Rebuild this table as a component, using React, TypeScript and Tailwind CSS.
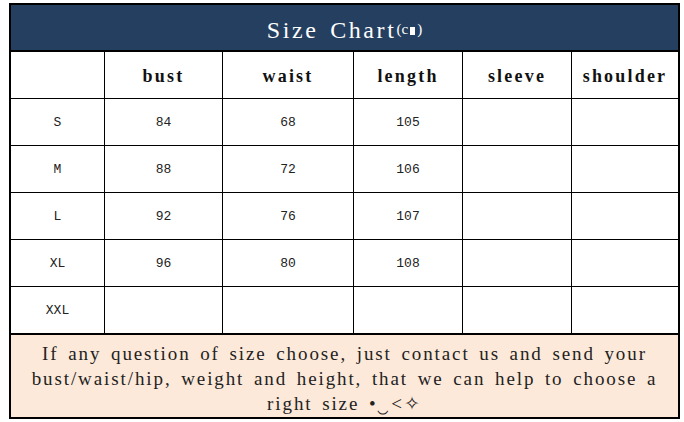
import React from 'react';

const cols = 'grid grid-cols-[94px_118px_131px_109px_109px_1fr]';

const headers = ['', 'bust', 'waist', 'length', 'sleeve', 'shoulder'];

const rows: string[][] = [
  ['S', '84', '68', '105', '', ''],
  ['M', '88', '72', '106', '', ''],
  ['L', '92', '76', '107', '', ''],
  ['XL', '96', '80', '108', '', ''],
  ['XXL', '', '', '', '', ''],
];

export default function App() {
  return (
    <div className="w-[684px] h-[422px] bg-white pt-[3px] pl-[9px] font-['Liberation_Serif',serif]">
      <div className="w-[671px] h-[416px] border-2 border-black flex flex-col">
        {/* Title */}
        <div className="h-[47px] shrink-0 bg-[#243f60] border-b-2 border-black flex items-center justify-center pt-[4px] text-white">
          <span className="text-[24px] tracking-[2.6px] [word-spacing:3px] leading-none">Size Chart</span>
          <span className="text-[15px] leading-none flex items-end">
            (c<span className="inline-block w-[5px] h-[8px] bg-white mx-[2px] mb-[2px]" />)
          </span>
        </div>

        {/* Header row */}
        <div className={`${cols} h-[47px] shrink-0 border-b border-black`}>
          {headers.map((h, i) => (
            <div
              key={i}
              className="flex items-center justify-center pt-[3px] border-r border-black last:border-r-0 text-[18px] font-bold tracking-[2.2px] text-[#111]"
            >
              {h}
            </div>
          ))}
        </div>

        {/* Data rows */}
        {rows.map((r, ri) => (
          <div
            key={ri}
            className={`${cols} h-[47px] shrink-0 border-black ${ri === rows.length - 1 ? 'border-b-2 h-[48px]' : 'border-b'}`}
          >
            {r.map((c, ci) => (
              <div
                key={ci}
                className="flex items-center justify-center pt-[2px] border-r border-black last:border-r-0 font-['Liberation_Mono',monospace] text-[13px] text-[#222]"
              >
                {c}
              </div>
            ))}
          </div>
        ))}

        {/* Footer note */}
        <div className="flex-1 bg-[#fde9d9] pt-[6px] text-[19px] leading-[25px] tracking-[1.9px] [word-spacing:3px] text-[#222] text-center whitespace-nowrap">
          <div>If any question of size choose, just contact us and send your</div>
          <div>bust/waist/hip, weight and height, that we can help to choose a</div>
          <div>right size •‿&lt;✧</div>
        </div>
      </div>
    </div>
  );
}
